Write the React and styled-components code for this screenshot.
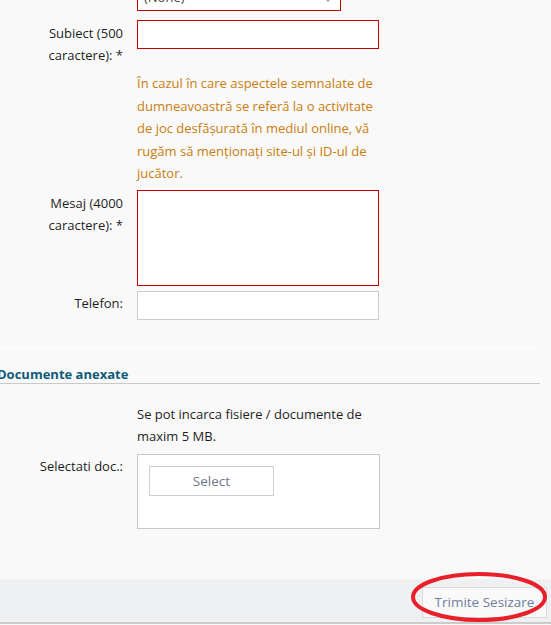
import React from 'react';
import styled, { createGlobalStyle } from 'styled-components';

const GlobalStyle = createGlobalStyle`
  html, body {
    margin: 0;
    padding: 0;
    background: #f9f9f9;
    overflow: hidden;
  }
  body {
    font-family: "Open Sans", "Noto Sans", sans-serif;
    font-size: 13px;
    color: #1e1e1e;
  }
`;

const Page = styled.div`
  width: 551px;
  height: 625px;
  display: flex;
  flex-direction: column;
  overflow: hidden;
`;

const Form = styled.div`
  width: 540px;
  margin-top: -17px;
  display: flex;
  flex-direction: column;
`;

const Row = styled.div`
  display: grid;
  grid-template-columns: 123px 242px;
  column-gap: 14px;
  margin-top: ${({ $gap }) => $gap || 0}px;
  align-items: start;
`;

const Label = styled.label`
  text-align: right;
  line-height: 22px;
  padding-top: ${({ $pt }) => $pt ?? 2}px;
`;

const Field = styled.div`
  grid-column: 2;
`;

const SelectBox = styled.div`
  width: 204px;
  height: 28px;
  box-sizing: border-box;
  border: 1px solid #c40000;
  background: #fff;
  display: flex;
  align-items: center;
  justify-content: space-between;
  padding: 0 8px 0 6px;
  color: #444;
`;

const Arrow = styled.span`
  width: 0;
  height: 0;
  border-left: 4px solid transparent;
  border-right: 4px solid transparent;
  border-top: 5px solid #999;
  margin-top: 4px;
`;

const Input = styled.div`
  box-sizing: border-box;
  width: ${({ $w }) => $w || 242}px;
  height: ${({ $h }) => $h || 29}px;
  background: #fff;
  border: 1px solid ${({ $error }) => ($error ? '#c40000' : '#cccccc')};
`;

const Hint = styled.p`
  grid-column: 2;
  margin: 0;
  width: 250px;
  color: #c97d0e;
  line-height: 22.6px;
`;

const Fieldset = styled.div`
  width: 540px;
  margin-top: 27px;
  border-top: 1px solid #ffffff;
`;

const Legend = styled.h3`
  margin: 0;
  margin-left: -3px;
  padding: 18px 0 1px;
  font-size: 13px;
  font-weight: 700;
  color: #0f5b78;
  line-height: 16px;
  border-bottom: 1px solid #c9c9c9;
`;

const Note = styled.p`
  grid-column: 2;
  margin: 0;
  line-height: 22px;
  width: 230px;
`;

const FileBox = styled.div`
  box-sizing: border-box;
  width: 243px;
  height: 75px;
  background: #fff;
  border: 1px solid #c8c8c8;
  padding: 11px 0 0 11px;
`;

const PickButton = styled.div`
  box-sizing: border-box;
  width: 125px;
  height: 30px;
  border: 1px solid #cfcfcf;
  display: flex;
  align-items: center;
  justify-content: center;
  color: #6e7688;
  font-size: 13.5px;
`;

const Footer = styled.div`
  margin-top: 50px;
  height: 42px;
  background: #eff0f2;
  border-bottom: 2px solid #cccccc;
  display: flex;
  justify-content: flex-end;
  align-items: center;
  padding-right: 4px;
  border-top: 1px solid #f3f3f5;
`;

const SubmitWrap = styled.div`
  position: relative;
`;

const Submit = styled.div`
  box-sizing: border-box;
  width: 125px;
  height: 31px;
  margin-top: 3px;
  background: #f9f9fa;
  border: 1px solid #dadada;
  color: #6d7f9c;
  font-size: 13.5px;
  display: flex;
  align-items: center;
  justify-content: center;
`;

const Annotation = styled.svg`
  position: absolute;
  left: -13px;
  top: -14px;
  width: 140px;
  height: 54px;
  overflow: visible;
  pointer-events: none;
`;

export default function App() {
  return (
    <Page>
      <GlobalStyle />
      <Form>
        <Row>
          <Field>
            <SelectBox>
              <span>(None)</span>
              <Arrow />
            </SelectBox>
          </Field>
        </Row>
        <Row $gap={9}>
          <Label>Subiect (500 caractere): *</Label>
          <Input $error />
        </Row>
        <Row $gap={6}>
          <Hint>
            În cazul în care aspectele semnalate de dumneavoastră se referă la o
            activitate de joc desfășurată în mediul online, vă rugăm să
            menționați site-ul și ID-ul de jucător.
          </Hint>
        </Row>
        <Row $gap={5}>
          <Label>Mesaj (4000 caractere): *</Label>
          <Input $error $h={96} />
        </Row>
        <Row $gap={5}>
          <Label $pt={1}>Telefon:</Label>
          <Input />
        </Row>
      </Form>
      <Fieldset>
        <Legend>Documente anexate</Legend>
        <Row $gap={19}>
          <Note>Se pot incarca fisiere / documente de maxim 5 MB.</Note>
        </Row>
        <Row $gap={7}>
          <Label $pt={1}>Selectati doc.:</Label>
          <FileBox>
            <PickButton>Select</PickButton>
          </FileBox>
        </Row>
      </Fieldset>
      <Footer>
        <SubmitWrap>
          <Submit>Trimite Sesizare</Submit>
          <Annotation viewBox="0 0 140 54">
            <ellipse cx="70" cy="27" rx="66" ry="23" fill="none" stroke="#e8202a" strokeWidth="4" />
          </Annotation>
        </SubmitWrap>
      </Footer>
    </Page>
  );
}
